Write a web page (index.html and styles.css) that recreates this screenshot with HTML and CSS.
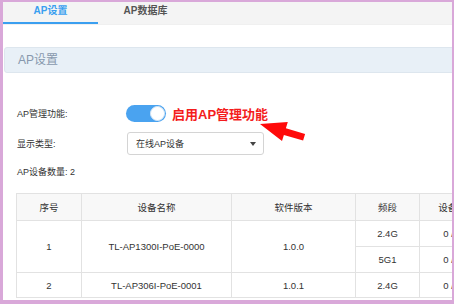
FILE: index.html
```html
<!DOCTYPE html>
<html lang="zh-CN">
<head>
    <meta charset="UTF-8">
    <title>AP设置</title>
    <link rel="stylesheet" href="styles.css">
</head>
<body>
    <div class="frame">
        <div class="tabs">
            <div class="tab active">AP设置</div>
            <div class="tab">AP数据库</div>
        </div>

        <div class="content">
            <div class="panel-title">AP设置</div>

            <div class="form">
                <div class="row row-switch">
                    <span class="label">AP管理功能:</span>
                    <span class="switch"><span class="knob"></span></span>
                    <span class="hint">启用AP管理功能</span>
                </div>
                <div class="row row-select">
                    <span class="label">显示类型:</span>
                    <div class="select">
                        <span>在线AP设备</span>
                        <span class="caret"></span>
                    </div>
                </div>
                <div class="count">AP设备数量: 2</div>
            </div>

            <table class="ap-table">
                <colgroup>
                    <col class="c-no">
                    <col class="c-name">
                    <col class="c-ver">
                    <col class="c-band">
                    <col class="c-dev">
                </colgroup>
                <tr class="head">
                    <th>序号</th>
                    <th>设备名称</th>
                    <th>软件版本</th>
                    <th>频段</th>
                    <th>设备数</th>
                </tr>
                <tr class="sub">
                    <td rowspan="2">1</td>
                    <td rowspan="2">TL-AP1300I-PoE-0000</td>
                    <td rowspan="2">1.0.0</td>
                    <td>2.4G</td>
                    <td>0 / 0</td>
                </tr>
                <tr class="sub">
                    <td>5G1</td>
                    <td>0 / 0</td>
                </tr>
                <tr class="last">
                    <td>2</td>
                    <td>TL-AP306I-PoE-0001</td>
                    <td>1.0.1</td>
                    <td>2.4G</td>
                    <td>0 / 0</td>
                </tr>
            </table>
        </div>

        <!-- 标注箭头 -->
        <svg class="arrow" width="55" height="40" viewBox="0 0 55 40">
            <polygon points="5,14 32.8,11.9 30.9,18.2 50.1,23.9 48.1,30.6 28.9,24.9 27,31.1" fill="#ff0a0a"/>
        </svg>
    </div>
</body>
</html>
```

FILE: styles.css
```css
body {
    margin: 0;
    padding: 0;
    background: #ffffff;
    font-family: 'Liberation Sans', 'Noto Sans CJK SC', sans-serif;
    color: #333;
}

.frame {
    position: relative;
    width: 454px;
    height: 304px;
    box-sizing: border-box;
    border-style: solid;
    border-color: #d9a8d9;
    border-width: 2px 2px 4px 3px;
    background: #ffffff;
    overflow: hidden;
}

.tabs {
    display: flex;
    height: 22px;
    background: #f4f4f4;
    border-bottom: 1px solid #f0f0f0;
}

.tab {
    width: 95px;
    height: 20px;
    line-height: 18px;
    text-align: center;
    font-size: 10px;
    font-weight: bold;
    color: #555;
    border-bottom: 2px solid transparent;
}

.tab.active {
    color: #3a9ff0;
    border-bottom-color: #3a9ff0;
}

.panel-title {
    margin: 22px -10px 0 1px;
    height: 24px;
    line-height: 24px;
    padding-left: 13px;
    background: #e8f0f7;
    border: 1px solid #dde6ee;
    border-radius: 3px;
    font-size: 12px;
    color: #8798ad;
}

.form {
    padding: 27px 0 0 14px;
    font-size: 9px;
}

.row {
    display: flex;
    align-items: center;
}

.row-switch {
    height: 26px;
}

.row-select {
    height: 23px;
    margin-top: 6px;
}

.label {
    width: 109px;
    flex-shrink: 0;
}

.switch {
    position: relative;
    width: 40px;
    height: 17px;
    border-radius: 9px;
    background: #4aa3f0;
    flex-shrink: 0;
}

.knob {
    position: absolute;
    right: 1px;
    top: 1px;
    width: 15px;
    height: 15px;
    box-sizing: border-box;
    border-radius: 50%;
    background: #fff;
    border: 1px solid #d6e6f5;
}

.hint {
    margin-left: 6px;
    font-size: 13px;
    font-weight: bold;
    color: #f41c1c;
}

.select {
    display: flex;
    align-items: center;
    justify-content: space-between;
    width: 137px;
    height: 23px;
    box-sizing: border-box;
    padding: 0 7px 0 8px;
    margin-left: 1px;
    border: 1px solid #d4d4d4;
    border-radius: 3px;
    background: #fff;
}

.caret {
    width: 0;
    height: 0;
    border-left: 3.5px solid transparent;
    border-right: 3.5px solid transparent;
    border-top: 4px solid #444;
}

.count {
    margin-top: 10px;
    height: 14px;
    line-height: 14px;
}

.ap-table {
    margin: 14px 0 0 13px;
    width: 469px;
    table-layout: fixed;
    border-collapse: collapse;
    font-size: 9.5px;
    color: #333;
}

.c-no { width: 65px; }
.c-name { width: 150px; }
.c-ver { width: 124px; }
.c-band { width: 64px; }
.c-dev { width: 66px; }

.ap-table th,
.ap-table td {
    border: 1px solid #e2e2e2;
    text-align: center;
    padding: 0;
    font-weight: normal;
    white-space: nowrap;
}

.ap-table th {
    background: #f8f8f8;
}

.head { height: 27px; }
.sub { height: 26px; }
.last { height: 25px; }

.arrow {
    position: absolute;
    left: 252px;
    top: 108px;
}
```
